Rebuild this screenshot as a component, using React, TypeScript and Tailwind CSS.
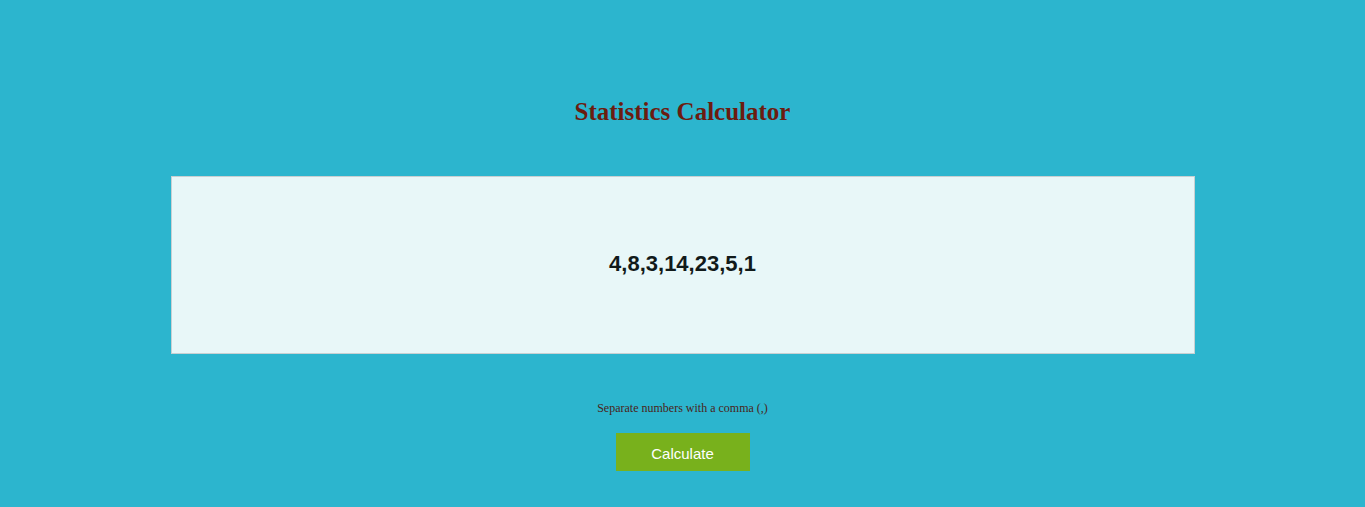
import React from "react";

export default function App() {
  return (
    <div className="min-h-[507px] w-full bg-[#2cb5ce] flex flex-col items-center">
      <h1 className="mt-[97px] text-[25px] font-bold leading-[30px] text-[#6b1c10] font-['Liberation_Serif','Times_New_Roman',serif]">
        Statistics Calculator
      </h1>
      <div className="mt-[49px] w-[1024px] h-[178px] pb-[3px] bg-[#e8f7f8] border border-[#c8d0d2] flex items-center justify-center">
        <span className="text-[22px] font-bold text-[#111a1a] font-['Liberation_Sans',Arial,sans-serif]">
          4,8,3,14,23,5,1
        </span>
      </div>
      <p className="mt-[47px] text-[12px] leading-[14px] text-[#4a2418] font-['Liberation_Serif','Times_New_Roman',serif]">
        Separate numbers with a comma (,)
      </p>
      <button className="mt-[18px] w-[134px] h-[38px] pt-[5px] bg-[#78b11c] text-white text-[15px] font-['Liberation_Sans',Arial,sans-serif]">
        Calculate
      </button>
    </div>
  );
}
